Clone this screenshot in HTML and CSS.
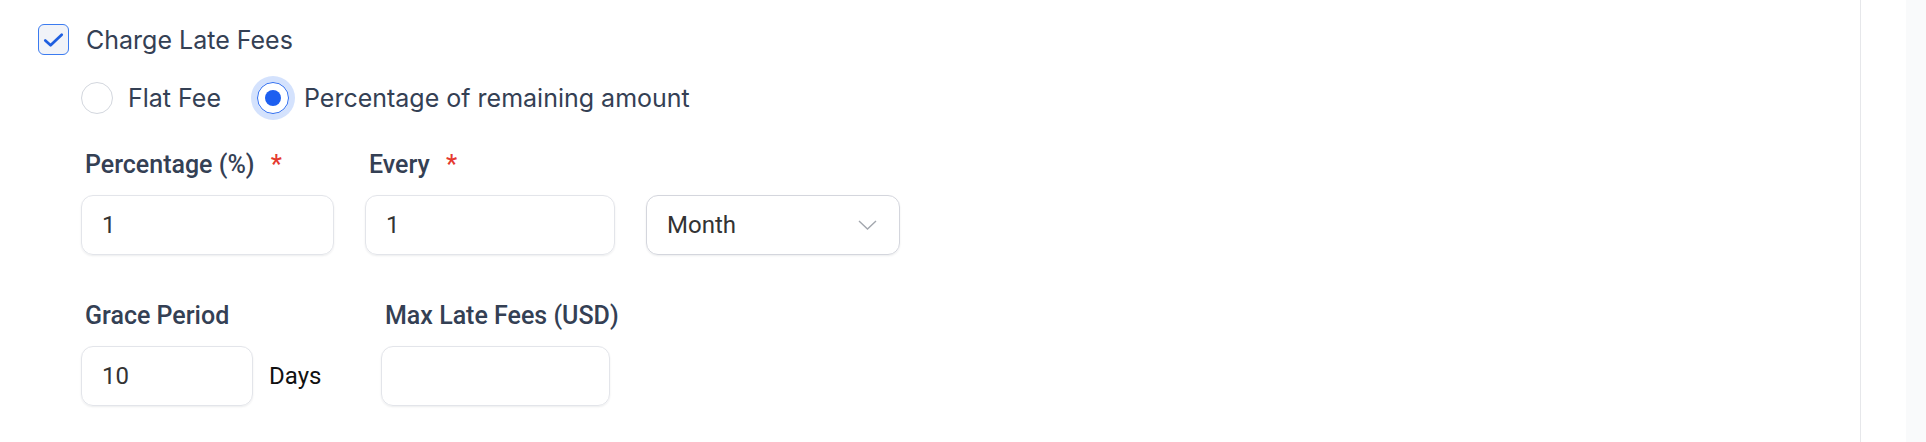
FILE: index.html
```html
<!DOCTYPE html>
<html lang="en">
<head>
  <meta charset="UTF-8">
  <title>Late Fees</title>
  <link rel="stylesheet" href="styles.css">
</head>
<body>
  <div class="page">
    <div class="main">
      <label class="check-row">
        <span class="checkbox">
          <svg width="30" height="30" viewBox="0 0 30 30"><path d="M6.5 15.5 L12 20.5 L23.5 9.5" fill="none" stroke="#1f5fe0" stroke-width="2.8" stroke-linecap="round" stroke-linejoin="round"/></svg>
        </span>
        Charge Late Fees
      </label>

      <div class="radio-row">
        <label class="radio-option">
          <span class="radio"></span>
          Flat Fee
        </label>
        <label class="radio-option">
          <span class="radio checked"><span class="dot"></span></span>
          Percentage of remaining amount
        </label>
      </div>

      <div class="fields">
        <div class="field w-253">
          <div class="label">Percentage (%) <span class="req">*</span></div>
          <div class="input">1</div>
        </div>
        <div class="field w-250">
          <div class="label">Every <span class="req">*</span></div>
          <div class="input">1</div>
        </div>
        <div class="field w-254">
          <div class="input select">
            Month
            <svg width="19" height="10" viewBox="0 0 19 10"><path d="M1 1 L9.5 9 L18 1" fill="none" stroke="#a3a7ae" stroke-width="1.4"/></svg>
          </div>
        </div>
      </div>

      <div class="fields second">
        <div class="field w-300">
          <div class="label">Grace Period</div>
          <div class="input-group">
            <div class="input w-172">10</div>
            <span class="unit">Days</span>
          </div>
        </div>
        <div class="field">
          <div class="label">Max Late Fees (USD)</div>
          <div class="input w-229"></div>
        </div>
      </div>
    </div>
    <div class="gutter"></div>
    <div class="rail"></div>
  </div>
</body>
</html>
```

FILE: styles.css
```css
body {
  margin: 0;
  font-family: Roboto, "Liberation Sans", sans-serif;
  background: #fff;
  color: #344054;
}

.page {
  display: flex;
  height: 442px;
}

.main {
  flex: 1;
  border-right: 1px solid #e6e7ea;
  padding: 24px 0 0 38px;
}

.gutter {
  width: 45px;
}

.rail {
  width: 20px;
  background: #f9fafb;
}

.check-row {
  display: flex;
  align-items: center;
  gap: 17px;
  font-family: Inter, Roboto, sans-serif;
  font-size: 25px;
  height: 31px;
}

.checkbox {
  width: 29px;
  height: 29px;
  border: 1px solid #3b7bf0;
  border-radius: 6px;
  background: #f1f3f8;
  display: flex;
}

.radio-row {
  display: flex;
  align-items: center;
  gap: 36px;
  height: 41px;
  margin-top: 22px;
  padding-left: 43px;
  font-family: Inter, Roboto, sans-serif;
  font-size: 25px;
}

.radio-option {
  display: flex;
  align-items: center;
  gap: 15px;
}

.radio {
  width: 30px;
  height: 30px;
  border: 1px solid #d3d7de;
  border-radius: 50%;
  display: flex;
  align-items: center;
  justify-content: center;
}

.radio.checked {
  border-color: #2f6ef0;
  box-shadow: 0 0 0 6px #d4e2fd;
}

.dot {
  width: 16px;
  height: 16px;
  border-radius: 50%;
  background: #1d5ff0;
}

.fields {
  display: flex;
  align-items: flex-end;
  gap: 31px;
  margin-top: 33px;
  padding-left: 43px;
}

.fields.second {
  gap: 0;
  margin-top: 47px;
}

.field {
  display: flex;
  flex-direction: column;
}

.label {
  font-size: 25px;
  font-weight: 500;
  line-height: 28px;
  padding-left: 4px;
  margin-bottom: 16px;
  white-space: nowrap;
}

.req {
  color: #e5392f;
  margin-left: 10px;
}

.input {
  box-sizing: border-box;
  height: 60px;
  border: 1px solid #e3e5ea;
  border-radius: 12px;
  box-shadow: 0 1px 2px rgba(16, 24, 40, 0.08);
  padding: 0 20px;
  display: flex;
  align-items: center;
  font-size: 24px;
  color: #333;
}

.select {
  justify-content: space-between;
  border-color: #d4d6dd;
  padding-right: 22px;
}

.input-group {
  display: flex;
  align-items: center;
  gap: 16px;
}

.unit {
  font-size: 24px;
  color: #111;
}

.w-253 { width: 253px; }
.w-250 { width: 250px; }
.w-254 { width: 254px; }
.w-300 { width: 300px; }
.w-172 { width: 172px; }
.w-229 { width: 229px; }
```
